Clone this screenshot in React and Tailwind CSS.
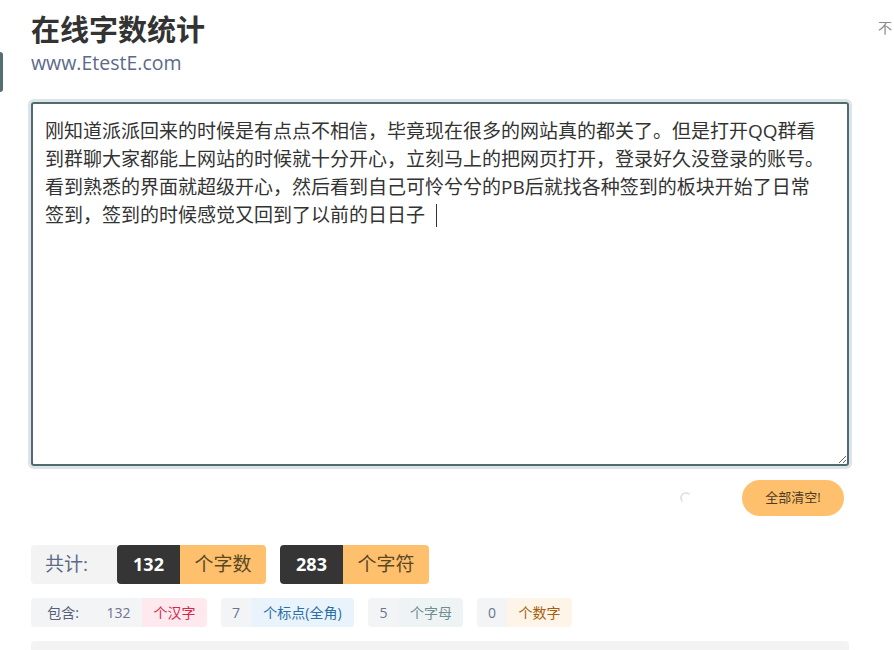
const text = [
  '刚知道派派回来的时候是有点点不相信，毕竟现在很多的网站真的都关了。但是打开QQ群看',
  '到群聊大家都能上网站的时候就十分开心，立刻马上的把网页打开，登录好久没登录的账号。',
  '看到熟悉的界面就超级开心，然后看到自己可怜兮兮的PB后就找各种签到的板块开始了日常',
  '签到，签到的时候感觉又回到了以前的日日子 ',
].join('\n');

const small = [
  { n: '132', label: '个汉字', cls: 'bg-[#fde9ee] text-[#d7284a]', nw: 'w-[47px]', lw: 'w-[65px]' },
  { n: '7', label: '个标点(全角)', cls: 'bg-[#e9f3fb] text-[#2c6ea6]', nw: 'w-[30px]', lw: 'w-[103px]' },
  { n: '5', label: '个字母', cls: 'bg-[#eef3f4] text-[#6f8d93]', nw: 'w-[31px]', lw: 'w-[64px]' },
  { n: '0', label: '个数字', cls: 'bg-[#fff4e8] text-[#a3600f]', nw: 'w-[30px]', lw: 'w-[65px]' },
];

function BigStat({ n, label }) {
  return (
    <div className="flex h-[39px] rounded overflow-hidden">
      <div className="w-[63px] bg-[#353535] text-white font-bold text-[18px] flex items-center justify-center">{n}</div>
      <div className="w-[86px] bg-[#ffc06e] text-[#5a4824] text-[19px] flex items-center justify-center">{label}</div>
    </div>
  );
}

export default function App() {
  return (
    <div
      className="relative min-h-[650px] bg-white flex gap-[29px] pl-[31px] overflow-hidden"
      style={{ fontFamily: '"Open Sans", "Noto Sans CJK SC", sans-serif' }}
    >
      <div className="absolute left-0 top-[52px] w-[3px] h-[40px] rounded-r bg-[#546e73]" />

      <main className="w-[818px] shrink-0">
        <h1 className="text-[29px] leading-[40px] font-bold text-[#333] mt-[10px]">在线字数统计</h1>
        <p className="text-[19.5px] leading-[24px] text-[#5b6a88] mt-[1px]">www.EtestE.com</p>

        <div className="relative mt-[27px]">
          <textarea
            defaultValue={text}
            className="block w-full h-[364px] resize-y border-2 border-[#4f6a70] rounded-[3px] shadow-[0_0_0_3px_#dde4e5] px-[12px] py-[13px] text-[19px] leading-[28px] text-[#333] outline-none"
            style={{ fontFamily: '"Open Sans", "Noto Sans CJK SC", sans-serif' }}
          />
          {/* caret */}
          <span className="absolute left-[405px] top-[102px] w-px h-[23px] bg-[#333]" />
        </div>

        <div className="flex items-center justify-end mt-[14px] pr-[5px] gap-[50px]">
          <div className="w-[12px] h-[12px] rounded-full border-2 border-[#e3e3e3] border-r-transparent border-b-transparent" />
          <button className="h-[36px] w-[102px] rounded-full bg-[#ffc06e] text-[#4a3b22] text-[13px]">全部清空!</button>
        </div>

        <div className="flex mt-[29px] gap-[14px]">
          <div className="flex">
            <div className="h-[39px] w-[86px] bg-[#f3f3f3] rounded-l text-[#5b6a88] text-[19px] flex items-center px-[14px]">共计:</div>
            <BigStat n="132" label="个字数" />
          </div>
          <BigStat n="283" label="个字符" />
        </div>

        <div className="flex mt-[14px] gap-[14px] text-[14px]">
          {small.map((s, i) => (
            <div key={s.label} className="flex h-[29px]">
              {i === 0 && (
                <div className="w-[64px] bg-[#f3f4f5] rounded-l text-[#555f78] flex items-center justify-center">包含:</div>
              )}
              <div className={`${s.nw} bg-[#f3f4f5] ${i === 0 ? '' : 'rounded-l'} text-[#6a7590] flex items-center justify-center`}>{s.n}</div>
              <div className={`${s.lw} ${s.cls} rounded-r flex items-center justify-center`}>{s.label}</div>
            </div>
          ))}
        </div>

        <div className="mt-[14px] h-[40px] bg-[#f3f3f3] rounded" />
      </main>

      <aside className="pt-[17px] text-[14px] text-[#8a8a8a] whitespace-nowrap">不</aside>
    </div>
  );
}
